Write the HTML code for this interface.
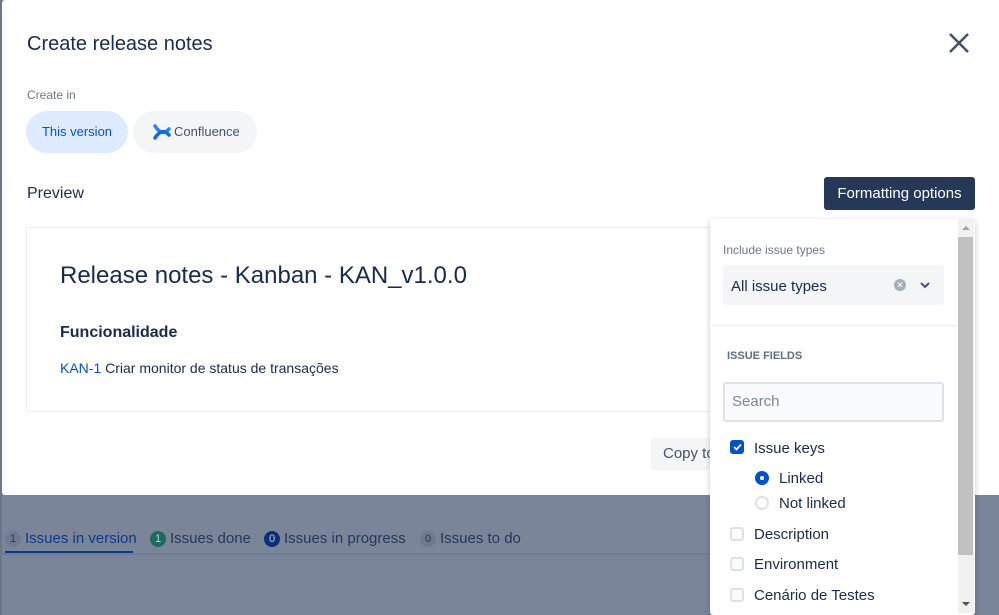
<!DOCTYPE html>
<html><head><style>
*{box-sizing:border-box;margin:0;padding:0}
body{width:999px;height:615px;overflow:hidden;background:#7a8599;font-family:"Liberation Sans",sans-serif;position:relative;color:#172b4d}
.modal{position:absolute;left:2px;top:0;width:1000px;height:495px;background:#fff;border-radius:3px}
.a{position:absolute;white-space:nowrap}
.pill{position:absolute;height:42px;border-radius:21px;font-size:13px;line-height:42px}
.tab{position:absolute;top:530px;font-size:15px;color:#253858}
.badge{display:inline-block;min-width:16px;height:16px;border-radius:8px;font-size:11px;line-height:16px;text-align:center;margin-right:4px;vertical-align:1px}
.cb{position:absolute;width:14px;height:14px;border:2px solid #dfe1e6;border-radius:3px;background:#fafbfc}
.lbl{position:absolute;font-size:15px;color:#172b4d}
</style></head><body>
<div class="a" style="left:0;top:0;width:2px;height:615px;background:#6b7689"></div>
<div class="modal">
<div class="a" style="left:25px;top:33px;font-size:20px;color:#172b4d">Create release notes</div>
<svg class="a" style="left:946px;top:32px" width="22" height="22" viewBox="0 0 22 22"><path d="M2 2L20 20M20 2L2 20" stroke="#42526e" stroke-width="2.5"/></svg>
<div class="a" style="left:25px;top:88px;font-size:12px;color:#6b778c">Create in</div>
<div class="pill" style="left:24px;top:111px;width:102px;background:#deebff;color:#0052cc;text-align:center">This version</div>
<div class="pill" style="left:131px;top:111px;width:124px;background:#f4f5f7;color:#42526e;padding-left:41px">Confluence</div>
<svg class="a" style="left:151px;top:123px" width="18" height="18" viewBox="0 0 18 18"><path d="M2 3Q9 14 16 6" stroke="#2684ff" stroke-width="3.5" fill="none" stroke-linecap="round"/><path d="M2 15Q9 4 16 12" stroke="#1868db" stroke-width="3.5" fill="none" stroke-linecap="round"/></svg>
<div class="a" style="left:25px;top:185px;font-size:16px;color:#172b4d">Preview</div>
<div class="a" style="left:822px;top:177px;width:151px;height:33px;background:#253858;border-radius:3px;color:#fff;font-size:15px;line-height:33px;text-align:center">Formatting options</div>
<div class="a" style="left:24px;top:227px;width:700px;height:185px;border:1px solid #ebecf0;border-radius:3px"></div>
<div class="a" style="left:58px;top:262px;font-size:24px;color:#172b4d">Release notes - Kanban - KAN_v1.0.0</div>
<div class="a" style="left:58px;top:324px;font-size:16px;font-weight:bold;color:#172b4d">Funcionalidade</div>
<div class="a" style="left:58px;top:360px;font-size:14px;color:#172b4d"><span style="color:#0052cc">KAN-1</span> Criar monitor de status de transações</div>
<div class="a" style="left:649px;top:438px;width:80px;height:32px;background:#f4f5f7;border-radius:3px;font-size:15px;line-height:32px;padding-left:12px;color:#42526e">Copy to</div>
</div>
<div class="tab" style="left:5px"><span class="badge" style="background:#6e7a90;color:#253858">1</span><span style="color:#0b3a8a">Issues in version</span></div>
<div class="a" style="left:5px;top:551px;width:128px;height:2px;background:#0b3a8a"></div>
<div class="a" style="left:0;top:553px;width:710px;height:2px;background:#717c90"></div>
<div class="tab" style="left:150px"><span class="badge" style="background:#1d6b5f;color:#ccc">1</span>Issues done</div>
<div class="tab" style="left:264px"><span class="badge" style="background:#0a2f7a;color:#ccc">0</span>Issues in progress</div>
<div class="tab" style="left:420px"><span class="badge" style="background:#6e7a90;color:#253858">0</span>Issues to do</div>

<div class="a" style="left:710px;top:219px;width:265px;height:396px;background:#fff;border-radius:3px;box-shadow:0 2px 6px rgba(9,30,66,.25)"></div>
<div class="a" style="left:958px;top:219px;width:16px;height:394px;background:#f1f1f1"></div>
<div class="a" style="left:958px;top:237px;width:15px;height:318px;background:#c1c1c1"></div>
<div class="a" style="left:962px;top:226px;width:0;height:0;border:4px solid transparent;border-bottom-color:#a3a3a3;border-top:0"></div>
<div class="a" style="left:962px;top:602px;width:0;height:0;border:4px solid transparent;border-top-color:#505050;border-bottom:0"></div>
<div class="a" style="left:723px;top:243px;font-size:12px;color:#6b778c">Include issue types</div>
<div class="a" style="left:723px;top:265px;width:221px;height:40px;background:#f4f5f7;border-radius:3px"></div>
<div class="a" style="left:731px;top:278px;font-size:15px;color:#172b4d">All issue types</div>
<div class="a" style="left:894px;top:279px;width:12px;height:12px;border-radius:6px;background:#a5adba;color:#fff;font-size:9px;line-height:12px;text-align:center">✕</div>
<svg class="a" style="left:920px;top:282px" width="10" height="7" viewBox="0 0 10 7"><path d="M1 1L5 5L9 1" stroke="#42526e" stroke-width="2" fill="none"/></svg>
<div class="a" style="left:711px;top:325px;width:246px;height:1px;background:#ebecf0"></div>
<div class="a" style="left:727px;top:350px;font-size:11px;font-weight:bold;color:#5e6c84">ISSUE FIELDS</div>
<div class="a" style="left:723px;top:382px;width:221px;height:40px;border:2px solid #dfe1e6;background:#fafbfc;border-radius:3px;font-size:15px;color:#7a869a;line-height:36px;padding-left:7px">Search</div>
<div class="cb" style="left:730px;top:440px;background:#0052cc;border-color:#0052cc"></div>
<svg class="a" style="left:733px;top:443px" width="9" height="8" viewBox="0 0 9 8"><path d="M1 4L3.5 6.5L8 1.5" stroke="#fff" stroke-width="1.8" fill="none"/></svg>
<div class="lbl" style="left:754px;top:440px">Issue keys</div>
<div class="a" style="left:755px;top:471px;width:14px;height:14px;border-radius:7px;background:#0052cc"></div>
<div class="a" style="left:760px;top:476px;width:4px;height:4px;border-radius:2px;background:#fff"></div>
<div class="lbl" style="left:779px;top:470px">Linked</div>
<div class="a" style="left:755px;top:496px;width:14px;height:14px;border-radius:7px;border:2px solid #dfe1e6"></div>
<div class="lbl" style="left:779px;top:495px">Not linked</div>
<div class="cb" style="left:730px;top:527px"></div><div class="lbl" style="left:754px;top:526px">Description</div>
<div class="cb" style="left:730px;top:557px"></div><div class="lbl" style="left:754px;top:556px">Environment</div>
<div class="cb" style="left:730px;top:588px"></div><div class="lbl" style="left:754px;top:587px">Cenário de Testes</div>
</body></html>
